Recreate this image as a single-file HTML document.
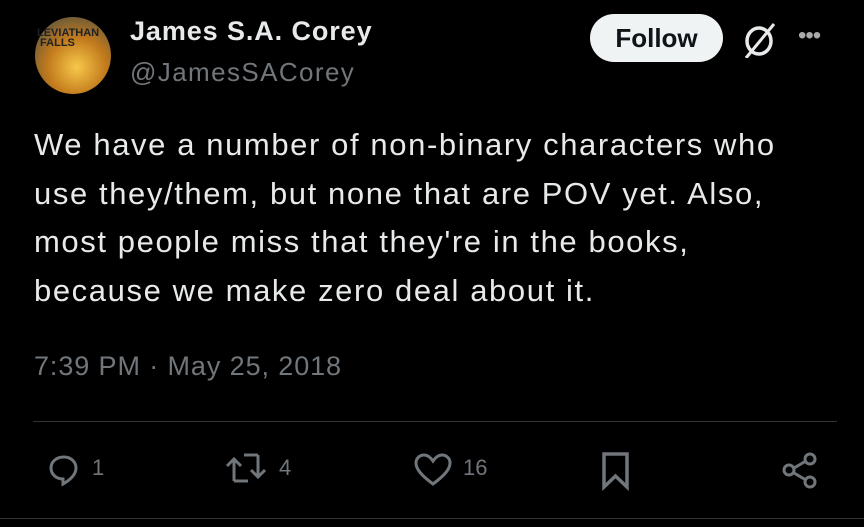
<!DOCTYPE html>
<html><head><style>
body{margin:0;width:864px;height:527px;background:#000;overflow:hidden;font-family:"Liberation Sans",sans-serif;position:relative}
.a{position:absolute}
.t{color:#e7e9ea;font-size:31px;line-height:48.5px;left:34px;top:121px;white-space:nowrap;letter-spacing:1.6px}
svg{position:absolute}
.c{color:#71767b;font-size:22px;top:455px}
</style></head><body>
<div class="a" style="left:35px;top:17px;width:76px;height:77px;border-radius:50%;background:radial-gradient(circle at 55% 65%,#f7c84a,#c27a1c 45%,#6b5a3a 80%)"></div>
<div class="a" style="left:37px;top:28px;font-size:11px;font-weight:bold;color:#222;line-height:10px">LEVIATHAN<br>&nbsp;FALLS</div>
<div class="a" style="left:130px;top:16px;color:#e7e9ea;font-size:27px;font-weight:bold;letter-spacing:0.9px">James S.A. Corey</div>
<div class="a" style="left:130px;top:57px;color:#71767b;font-size:26px;letter-spacing:1.4px">@JamesSACorey</div>
<div class="a" style="left:590px;top:14px;width:133px;height:48px;border-radius:24px;background:#eff3f4;color:#0f1419;font-size:26px;font-weight:bold;text-align:center;line-height:48px">Follow</div>
<svg style="left:740px;top:22px" width="40" height="36" viewBox="0 0 40 36"><ellipse cx="19" cy="19" rx="12" ry="13" fill="none" stroke="#e7e9ea" stroke-width="3.5"/><path d="M34 2 L6 36" stroke="#e7e9ea" stroke-width="3" fill="none"/></svg>
<div class="a" style="left:798px;top:22px;color:#aaa;font-size:24px;letter-spacing:-1px">•••</div>
<div class="a t">We have a number of non-binary characters who<br>use they/them, but none that are POV yet. Also,<br>most people miss that they're in the books,<br>because we make zero deal about it.</div>
<div class="a" style="left:34px;top:351px;color:#71767b;font-size:27px;letter-spacing:0.9px">7:39 PM · May 25, 2018</div>
<div class="a" style="left:33px;top:421px;width:804px;height:1px;background:#2f3336"></div>
<div class="a" style="left:0;top:518px;width:864px;height:1px;background:#2f3336"></div>
<svg style="left:44px;top:451px" width="40" height="40" viewBox="0 0 40 40" fill="none" stroke="#71767b" stroke-width="3"><path d="M20 6c-8 0-13 5-13 11s5 11 12 11v5c7-4 13-9 13-16 0-6-5-11-12-11z"/></svg>
<div class="a c" style="left:92px">1</div>
<svg style="left:224px;top:451px" width="44" height="34" viewBox="0 0 44 34" fill="none" stroke="#71767b" stroke-width="3"><path d="M10 30V8M3 15l7-7 7 7M10 30h14M34 4v22M27 19l7 7 7-7M34 4H20"/></svg>
<div class="a c" style="left:279px">4</div>
<svg style="left:413px;top:452px" width="40" height="36" viewBox="0 0 40 36" fill="none" stroke="#71767b" stroke-width="3"><path d="M20 32C8 23 3 17 3 11c0-5 4-8 8-8 4 0 7 3 9 6 2-3 5-6 9-6 4 0 8 3 8 8 0 6-5 12-17 21z"/></svg>
<div class="a c" style="left:463px">16</div>
<svg style="left:600px;top:451px" width="32" height="40" viewBox="0 0 32 40" fill="none" stroke="#71767b" stroke-width="3.5"><path d="M4 3h23v33L15.5 25 4 36z"/></svg>
<svg style="left:780px;top:451px" width="40" height="40" viewBox="0 0 40 40" fill="none" stroke="#71767b" stroke-width="3"><circle cx="30" cy="8" r="5"/><circle cx="30" cy="31" r="5"/><circle cx="9" cy="19" r="5"/><path d="M14 17l12-7M14 22l12 7"/></svg>
</body></html>
